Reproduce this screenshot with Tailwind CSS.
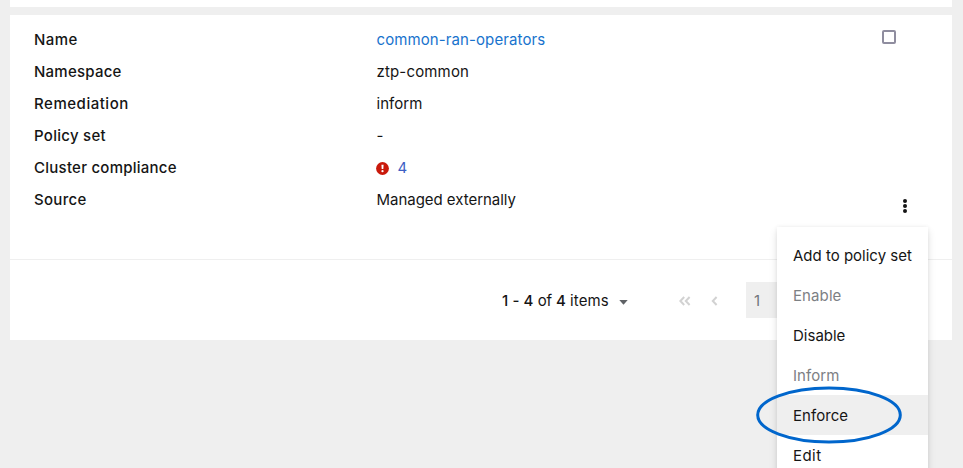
<!DOCTYPE html>
<html lang="en"><head><meta charset="utf-8"><title>Policies</title>
<script src="https://cdn.jsdelivr.net/npm/@tailwindcss/browser@4"></script></head>
<body class="h-[468px] overflow-hidden bg-[#efefef] font-['Inter',sans-serif] text-[15px] leading-6 text-[#151515]">
<main class="relative flex h-[468px] flex-col gap-2 overflow-hidden pr-[11px] pl-[10px]">
  <div class="h-[7px] shrink-0 bg-white"></div>
  <section class="relative h-[325px] shrink-0 bg-white">
    <div class="flex h-[245px] justify-between border-b border-[#efefef] pt-[13px] pl-6">
      <dl class="grid h-[184px] grid-cols-[342.5px_300px] auto-rows-[24px] gap-y-2">
        <dt class="font-medium tracking-[.42px]">Name</dt><dd class="tracking-[.1px] text-[#1873cd]">common-ran-operators</dd>
        <dt class="font-medium tracking-[.24px]">Namespace</dt><dd class="tracking-[.16px]">ztp-common</dd>
        <dt class="font-medium tracking-[.53px]">Remediation</dt><dd class="tracking-[.05px]">inform</dd>
        <dt class="font-medium tracking-[.28px]">Policy set</dt><dd>-</dd>
        <dt class="font-medium tracking-[.25px]">Cluster compliance</dt>
        <dd class="flex items-center gap-[8.5px] text-[#3d5fc4]">
          <svg class="-ml-[.5px] size-[13px]" viewBox="0 0 13 13"><circle cx="6.5" cy="6.5" r="6.4" fill="#c9190b"/><path d="M5.4 2.7h2.2l-.3 4.4H5.7z" fill="#fff"/><circle cx="6.5" cy="9.2" r="1.15" fill="#fff"/></svg><span>4</span>
        </dd>
        <dt class="font-medium tracking-[.3px]">Source</dt><dd class="tracking-[-.03px]">Managed externally</dd>
      </dl>
      <div class="flex w-[80px] flex-col">
        <span class="mt-[2px] ml-[10px] size-[14px] rounded-[2px] border-2 border-[#8f8d9f]"></span>
        <svg class="mt-[155px] ml-[31px] h-[14px] w-[4px]" viewBox="0 0 4 14" fill="#151515"><circle cx="2" cy="2" r="2"/><circle cx="2" cy="7" r="2"/><circle cx="2" cy="12" r="2"/></svg>
      </div>
    </div>
    <div class="flex h-[80px] items-center pl-[492px]">
      <div class="w-[107px] pt-[2px] whitespace-nowrap"><b class="font-medium tracking-[.1px]">1 - 4</b> <span class="tracking-[-.25px]">of</span> <b class="font-medium">4</b> <span class="tracking-[.1px]">items</span></div>
      <svg class="mt-1 ml-[10px] h-[5px] w-[9px]" viewBox="0 0 9 5"><path d="M.3 0h8.4L4.5 4.8z" fill="#5f6266"/></svg>
      <svg class="mt-[2px] ml-[51px] h-[10px] w-[12px]" viewBox="0 0 12 10" fill="none" stroke="#d2d2d2" stroke-width="2"><path d="M5.2 1 1.4 5l3.8 4M10.6 1 6.8 5l3.8 4"/></svg>
      <svg class="mt-[2px] ml-[20px] h-[10px] w-[7px]" viewBox="0 0 7 10" fill="none" stroke="#d2d2d2" stroke-width="2"><path d="M5.6 1 1.8 5l3.8 4"/></svg>
      <div class="ml-[28px] flex h-9 w-[60px] items-center bg-[#efefef] pt-[2px] pl-2 text-[#72767b]">1</div>
    </div>
  </section>
  <nav class="absolute top-[227px] left-[777px] w-[151px] bg-white py-2 shadow-[0_4px_8px_rgba(3,3,3,.12),0_0_4px_rgba(3,3,3,.06)]">
    <a class="block h-10 px-4 pt-[9px] whitespace-nowrap">Add to policy set</a>
    <a class="block h-10 px-4 pt-[9px] tracking-[.1px] text-[#7d8084]">Enable</a>
    <a class="block h-10 px-4 pt-[9px]">Disable</a>
    <a class="block h-10 px-4 pt-[9px] tracking-[.08px] text-[#7d8084]">Inform</a>
    <a class="block h-10 bg-[#efefef] px-4 pt-[9px] tracking-[.05px]">Enforce</a>
    <a class="block h-10 px-4 pt-[9px] tracking-[.45px]">Edit</a>
  </nav>
  <svg class="absolute top-[385px] left-[755px] h-[60px] w-[148px]" viewBox="0 0 148 60"><ellipse cx="74" cy="30" rx="71.3" ry="27" fill="none" stroke="#0066cc" stroke-width="3"/></svg>
</main>
</body></html>
